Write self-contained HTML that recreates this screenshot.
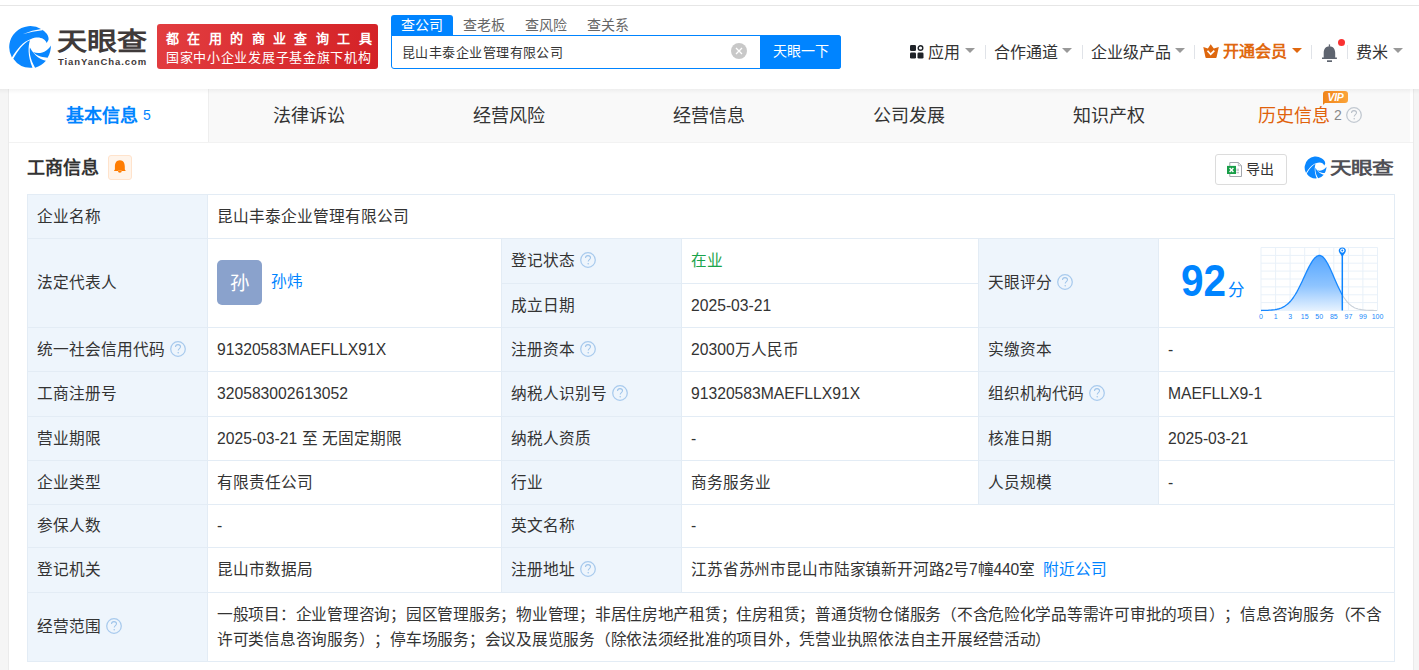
<!DOCTYPE html>
<html lang="zh-CN"><head><meta charset="utf-8">
<style>
*{box-sizing:border-box;margin:0;padding:0}
html,body{width:1419px;height:670px;overflow:hidden}
body{position:relative;background:#f5f5f5;font-family:"Liberation Sans",sans-serif;color:#333;text-spacing-trim:space-all}
.a{position:absolute;white-space:nowrap}
#top{left:0;top:0;width:1419px;height:89px;background:#fff;border-top:5px solid #fff}
#topline{left:0;top:5px;width:1419px;height:1px;background:#e6e6e6}
#hshadow{left:0;top:89px;width:1419px;height:5px;background:linear-gradient(rgba(0,0,0,.045),rgba(0,0,0,0))}
#card{left:8px;top:89px;width:1406px;height:600px;background:#fff;border-left:1px solid #ebebeb;border-right:1px solid #ebebeb}
.tab{top:89px;height:53px;width:200px;background:#f9f9f9;font-size:18px;line-height:53px;padding-top:1px;text-align:center;color:#333}
.lbl{font-size:15.7px;line-height:20px;color:#333}
.val{font-size:15.7px;line-height:20px;color:#333}
.bg{background:#eef5fc}
.cell{display:flex;align-items:center;gap:0}
.cell .q{margin-left:5px;position:relative;top:-1px}
.hl{background:#e3ecf5;height:1px}
.vl{background:#e3ecf5;width:1px}
.q{display:block;width:16px;height:16px;flex:none}
.nav{font-size:16px;line-height:20px;color:#333;top:43px}
.tri{width:0;height:0;border-left:5px solid transparent;border-right:5px solid transparent;border-top:5px solid #999;top:48px}
.sep{width:1px;height:14px;background:#e0e3e8;top:45px}
</style></head><body>
<div class="a" id="top"></div>
<div class="a" id="topline"></div>

<!-- logo -->
<svg class="a" style="left:8px;top:25px" width="44" height="44" viewBox="8 25 44 44">
<g fill="#0a87ff">
<path d="M11.9,57.5 A21.1,21.1 0 0 1 41.5,29.3 C46.1,32.2 49.4,36.2 48.4,40.1 L46.7,43.1 C44.8,38.1 38.2,35.8 31,39.1 C23.1,41.4 16.5,50 11.9,57.5 Z"/>
<path d="M13.3,58.8 C17.8,50.6 23.8,42.4 30,40.2 C28,46 27.5,56 32.5,67.7 A21.1,21.1 0 0 1 13.3,58.8 Z"/>
<path d="M29.9,47.4 C29.3,52 29.8,58 35.1,67.7 A21.1,21.1 0 0 0 45.9,60.8 C41,59.5 35,56.5 29.9,47.4 Z"/>
<path d="M33.1,52.1 C37,53.5 42,53.5 46.3,50.4 C48.5,49 50,47.5 50.9,45.6 C51,49 50,54 47.6,57.7 C44,57.5 37,56.5 33.1,52.1 Z"/>
</g>
<path d="M22.5,34.3 Q32,30 42.5,28.8 L42.5,30.2 Q32.5,31.4 22.5,34.3Z" fill="#fff"/>
</svg>
<div class="a" style="left:57px;top:26px;font-size:25px;line-height:30px;font-weight:bold;color:#3f3a3a;transform-origin:0 0;transform:scaleX(1.2)">天眼查</div>
<div class="a" style="left:58px;top:57px;font-size:9.5px;line-height:10px;font-weight:bold;color:#3f3a3a;letter-spacing:0.9px">TianYanCha.com</div>

<!-- red banner -->
<div class="a" style="left:157px;top:24px;width:221px;height:45px;border-radius:3px;background:linear-gradient(100deg,#e23d40,#d42226)"></div>
<div class="a" style="left:166px;top:30px;font-size:13px;line-height:18px;color:#fff;letter-spacing:8.4px;font-weight:bold">都在用的商业查询工具</div>
<div class="a" style="left:166px;top:48.5px;font-size:13px;line-height:18px;color:#fff;letter-spacing:0.7px">国家中小企业发展子基金旗下机构</div>

<!-- search -->
<div class="a" style="left:391px;top:15px;width:62px;height:21px;background:#0084ff;border-radius:3px 3px 0 0"></div>
<div class="a" style="left:391px;top:15px;width:62px;font-size:14px;line-height:20px;text-align:center;color:#fff">查公司</div>
<div class="a" style="left:453px;top:15px;width:62px;font-size:14px;line-height:20px;text-align:center;color:#666">查老板</div>
<div class="a" style="left:515px;top:15px;width:62px;font-size:14px;line-height:20px;text-align:center;color:#666">查风险</div>
<div class="a" style="left:577px;top:15px;width:62px;font-size:14px;line-height:20px;text-align:center;color:#666">查关系</div>
<div class="a" style="left:391px;top:35px;width:450px;height:34px;border:1px solid #0084ff;border-radius:0 3px 3px 3px;background:#fff"></div>
<div class="a" style="left:402px;top:42.5px;font-size:13px;letter-spacing:0.45px;line-height:20px;color:#333">昆山丰泰企业管理有限公司</div>
<div class="a" style="left:731px;top:43px;width:16px;height:16px;border-radius:50%;background:#c8c8c8"></div>
<svg class="a" style="left:731px;top:43px" width="16" height="16" viewBox="0 0 16 16"><path d="M5,5 L11,11 M11,5 L5,11" stroke="#fff" stroke-width="1.3"/></svg>
<div class="a" style="left:760px;top:35px;width:81px;height:34px;background:#0084ff;border-radius:0 3px 3px 0"></div>
<div class="a" style="left:760px;top:41px;width:81px;font-size:14px;line-height:20px;text-align:center;color:#fff">天眼一下</div>

<!-- right nav -->
<svg class="a" style="left:910px;top:45px" width="14" height="14" viewBox="0 0 14 14"><g fill="#1f2329"><rect x="0" y="0" width="6" height="6" rx="1.3"/><rect x="0" y="7.5" width="6" height="6" rx="1.3"/><rect x="7.5" y="7.5" width="6" height="6" rx="1.3"/></g><circle cx="10.5" cy="3" r="2.3" fill="none" stroke="#1f2329" stroke-width="1.4"/></svg>
<div class="a nav" style="left:928px">应用</div>
<div class="a tri" style="left:965px"></div>
<div class="a sep" style="left:985px"></div>
<div class="a nav" style="left:994px">合作通道</div>
<div class="a tri" style="left:1062px"></div>
<div class="a sep" style="left:1082px"></div>
<div class="a nav" style="left:1091px">企业级产品</div>
<div class="a tri" style="left:1175px"></div>
<div class="a sep" style="left:1194px"></div>
<svg class="a" style="left:1203px;top:44px" width="16" height="14" viewBox="0 0 16 14"><path d="M0.3,3.1 L4.9,4.6 L7.7,0.3 L10.8,4.6 L15.8,3.1 L13.5,13.5 Q13.3,13.9 12.8,13.9 L3.2,13.9 Q2.7,13.9 2.5,13.5 Z" fill="#de670e"/><path d="M4.5,6.7 L7.7,10.2 L11.3,6.7" stroke="#fff" stroke-width="1.7" fill="none"/></svg>
<div class="a nav" style="left:1223px;top:42px;color:#e0680f;font-weight:bold">开通会员</div>
<div class="a tri" style="left:1292px;border-top-color:#e0680f"></div>
<div class="a sep" style="left:1311px"></div>
<svg class="a" style="left:1322px;top:42.5px" width="15" height="20" viewBox="0 0 15 20"><g fill="#5f6570"><rect x="6.8" y="1.4" width="1.3" height="2.4"/><path d="M7.45,3.3 C11,3.4 13.2,6 13.2,9.8 L13.2,14.4 L14.9,14.4 L14.9,16.1 L0,16.1 L0,14.4 L1.7,14.4 L1.7,9.8 C1.7,6 3.9,3.4 7.45,3.3 Z"/><rect x="5" y="17.3" width="5" height="1.7"/></g></svg>
<div class="a" style="left:1338px;top:39px;width:7px;height:7px;border-radius:50%;background:#fa3232"></div>
<div class="a sep" style="left:1347px"></div>
<div class="a nav" style="left:1356px">费米</div>
<div class="a tri" style="left:1393px"></div>

<!-- card & tabs -->
<div class="a" id="card"></div>
<div class="a tab" style="left:9px;background:#fff;border-right:1px solid #eee;color:#0084ff;font-weight:bold">基本信息<span style="font-weight:normal;font-size:14px;margin-left:5px;position:relative;top:-2px">5</span></div>
<div class="a tab" style="left:209px">法律诉讼</div>
<div class="a tab" style="left:409px">经营风险</div>
<div class="a tab" style="left:609px">经营信息</div>
<div class="a tab" style="left:809px">公司发展</div>
<div class="a tab" style="left:1009px">知识产权</div>
<div class="a tab" style="left:1209px;width:201px;color:#e0620c;text-align:left;padding-left:49px">历史信息<span style="color:#888;font-size:14px;margin-left:4px;position:relative;top:-2.5px">2</span></div>
<svg class="a" style="left:1346px;top:107px" width="16" height="16" viewBox="0 0 16 16"><circle cx="8" cy="8" r="7.3" fill="none" stroke="#c2c9d1" stroke-width="1.3"/><path d="M5.5,6 C5.5,4.4 6.6,3.6 8,3.6 C9.4,3.6 10.5,4.5 10.5,5.8 C10.5,7.5 8.2,7.7 8.2,9.6" fill="none" stroke="#b8bfc8" stroke-width="1.05"/><circle cx="8.2" cy="11.7" r="0.75" fill="#b8bfc8"/></svg>
<div class="a" style="left:9px;top:142px;width:1404px;height:1px;background:#f2f2f2"></div>
<div class="a" id="hshadow"></div>

<!-- VIP badge -->
<div class="a" style="left:1323px;top:91px;width:25px;height:12px;border-radius:3px 3px 3px 0;background:linear-gradient(90deg,#f08419,#fba43a);color:#fff;font-size:10.5px;line-height:12px;font-weight:bold;font-style:italic;text-align:center;letter-spacing:-0.3px">VIP</div>
<div class="a" style="left:1323px;top:102px;width:0;height:0;border-top:3px solid #f08419;border-right:3px solid transparent"></div>

<!-- section header -->
<div class="a" style="left:27px;top:157px;font-size:18px;line-height:22px;font-weight:bold;color:#333">工商信息</div>
<div class="a" style="left:108px;top:155px;width:24px;height:25px;background:#fff4ea;border:1px solid #ffe3cc;border-radius:3px"></div>
<svg class="a" style="left:114px;top:160px" width="12" height="14" viewBox="0 0 12 14"><path d="M5.85,0.2 C9.3,0.2 10.8,3 10.8,6.5 L10.8,9.4 L11.8,10.9 L-0.1,10.9 L0.9,9.4 L0.9,6.5 C0.9,3 2.4,0.2 5.85,0.2 Z M3.9,10.8 A1.95,1.95 0 0 0 7.8,10.8 Z" fill="#ff7c00"/></svg>

<div class="a" style="left:1215px;top:154px;width:72px;height:31px;border:1px solid #dcdcdc;border-radius:3px;background:#fff"></div>
<svg class="a" style="left:1226px;top:162px" width="17" height="16" viewBox="0 0 17 16"><path d="M3.8,0.5 L12.3,0.5 L15.5,3.7 L15.5,14.5 L3.8,14.5 Z" fill="#fff" stroke="#a3a7ad" stroke-width="1"/><path d="M12.3,0.5 L12.3,3.7 L15.5,3.7" fill="none" stroke="#a3a7ad" stroke-width="0.8"/><rect x="10.4" y="6.6" width="2.6" height="2.6" fill="#c9ccd0"/><rect x="10.4" y="10.3" width="2.6" height="0.9" fill="#a3a7ad"/><rect x="1" y="3.9" width="9" height="8.1" fill="#189e48"/><path d="M3.6,6 L7.4,10 M7.4,6 L3.6,10" stroke="#fff" stroke-width="1.4"/></svg>
<div class="a" style="left:1246px;top:159px;font-size:14px;line-height:20px;color:#333">导出</div>

<svg class="a" style="left:1304px;top:156px" width="23" height="23" viewBox="8 25 44 44">
<g fill="#0a87ff">
<path d="M11.9,57.5 A21.1,21.1 0 0 1 41.5,29.3 C46.1,32.2 49.4,36.2 48.4,40.1 L46.7,43.1 C44.8,38.1 38.2,35.8 31,39.1 C23.1,41.4 16.5,50 11.9,57.5 Z"/>
<path d="M13.3,58.8 C17.8,50.6 23.8,42.4 30,40.2 C28,46 27.5,56 32.5,67.7 A21.1,21.1 0 0 1 13.3,58.8 Z"/>
<path d="M29.9,47.4 C29.3,52 29.8,58 35.1,67.7 A21.1,21.1 0 0 0 45.9,60.8 C41,59.5 35,56.5 29.9,47.4 Z"/>
<path d="M33.1,52.1 C37,53.5 42,53.5 46.3,50.4 C48.5,49 50,47.5 50.9,45.6 C51,49 50,54 47.6,57.7 C44,57.5 37,56.5 33.1,52.1 Z"/>
</g>
</svg>
<div class="a" style="left:1330px;top:157px;font-size:17.5px;line-height:22px;font-weight:bold;color:#505056;transform-origin:0 0;transform:scaleX(1.24)">天眼查</div>

<!-- TABLE -->
<div id="tbl">
<div class="a" style="left:27px;top:194px;width:1368px;height:468px;background:#fff"></div>
<div class="a bg" style="left:27px;top:194px;width:180px;height:467px"></div>
<div class="a bg" style="left:501px;top:238px;width:180px;height:354px"></div>
<div class="a bg" style="left:978px;top:238px;width:180px;height:266px"></div>
<div class="a hl" style="left:27px;top:194px;width:1368px"></div>
<div class="a hl" style="left:27px;top:238px;width:1368px"></div>
<div class="a hl" style="left:501px;top:283px;width:478px"></div>
<div class="a hl" style="left:27px;top:327px;width:1368px"></div>
<div class="a hl" style="left:27px;top:371px;width:1368px"></div>
<div class="a hl" style="left:27px;top:416px;width:1368px"></div>
<div class="a hl" style="left:27px;top:460px;width:1368px"></div>
<div class="a hl" style="left:27px;top:504px;width:1368px"></div>
<div class="a hl" style="left:27px;top:547px;width:1368px"></div>
<div class="a hl" style="left:27px;top:592px;width:1368px"></div>
<div class="a hl" style="left:27px;top:661px;width:1368px"></div>
<div class="a vl" style="left:27px;top:194px;height:468px"></div>
<div class="a vl" style="left:1394px;top:194px;height:468px"></div>
<div class="a vl" style="left:207px;top:194px;height:468px"></div>
<div class="a vl" style="left:501px;top:238px;height:355px"></div>
<div class="a vl" style="left:681px;top:238px;height:355px"></div>
<div class="a vl" style="left:978px;top:238px;height:267px"></div>
<div class="a vl" style="left:1158px;top:238px;height:267px"></div>
<div class="a lbl cell" style="left:37px;top:195px;height:43px;">企业名称</div>
<div class="a val cell" style="left:217px;top:195px;height:43px;">昆山丰泰企业管理有限公司</div>
<div class="a lbl cell" style="left:37px;top:239px;height:88px;">法定代表人</div>
<div class="a" style="left:217px;top:260px;width:45px;height:45px;border-radius:5px;background:#8aa2cc;color:#fff;font-size:19.5px;line-height:46px;text-align:center">孙</div>
<div class="a val" style="left:271px;top:272px;color:#0084ff">孙炜</div>
<div class="a lbl cell" style="left:511px;top:239px;height:44px;">登记状态<svg class="q" width="16" height="16" viewBox="0 0 16 16"><circle cx="8" cy="8" r="7.3" fill="none" stroke="#a8caed" stroke-width="1.25"/><path d="M5.5,6 C5.5,4.4 6.6,3.6 8,3.6 C9.4,3.6 10.5,4.5 10.5,5.8 C10.5,7.5 8.2,7.7 8.2,9.6" fill="none" stroke="#9fc4ea" stroke-width="1.05"/><circle cx="8.2" cy="11.7" r="0.75" fill="#9fc4ea"/></svg></div>
<div class="a val cell" style="left:691px;top:239px;height:44px;color:#1aa44b">在业</div>
<div class="a lbl cell" style="left:511px;top:284px;height:43px;">成立日期</div>
<div class="a val cell" style="left:691px;top:284px;height:43px;">2025-03-21</div>
<div class="a lbl cell" style="left:988px;top:239px;height:88px;">天眼评分<svg class="q" width="16" height="16" viewBox="0 0 16 16"><circle cx="8" cy="8" r="7.3" fill="none" stroke="#a8caed" stroke-width="1.25"/><path d="M5.5,6 C5.5,4.4 6.6,3.6 8,3.6 C9.4,3.6 10.5,4.5 10.5,5.8 C10.5,7.5 8.2,7.7 8.2,9.6" fill="none" stroke="#9fc4ea" stroke-width="1.05"/><circle cx="8.2" cy="11.7" r="0.75" fill="#9fc4ea"/></svg></div>
<div class="a lbl cell" style="left:37px;top:328px;height:43px;">统一社会信用代码<svg class="q" width="16" height="16" viewBox="0 0 16 16"><circle cx="8" cy="8" r="7.3" fill="none" stroke="#a8caed" stroke-width="1.25"/><path d="M5.5,6 C5.5,4.4 6.6,3.6 8,3.6 C9.4,3.6 10.5,4.5 10.5,5.8 C10.5,7.5 8.2,7.7 8.2,9.6" fill="none" stroke="#9fc4ea" stroke-width="1.05"/><circle cx="8.2" cy="11.7" r="0.75" fill="#9fc4ea"/></svg></div>
<div class="a val cell" style="left:217px;top:328px;height:43px;">91320583MAEFLLX91X</div>
<div class="a lbl cell" style="left:511px;top:328px;height:43px;">注册资本<svg class="q" width="16" height="16" viewBox="0 0 16 16"><circle cx="8" cy="8" r="7.3" fill="none" stroke="#a8caed" stroke-width="1.25"/><path d="M5.5,6 C5.5,4.4 6.6,3.6 8,3.6 C9.4,3.6 10.5,4.5 10.5,5.8 C10.5,7.5 8.2,7.7 8.2,9.6" fill="none" stroke="#9fc4ea" stroke-width="1.05"/><circle cx="8.2" cy="11.7" r="0.75" fill="#9fc4ea"/></svg></div>
<div class="a val cell" style="left:691px;top:328px;height:43px;">20300万人民币</div>
<div class="a lbl cell" style="left:988px;top:328px;height:43px;">实缴资本</div>
<div class="a val cell" style="left:1168px;top:328px;height:43px;">-</div>
<div class="a lbl cell" style="left:37px;top:372px;height:44px;">工商注册号</div>
<div class="a val cell" style="left:217px;top:372px;height:44px;">320583002613052</div>
<div class="a lbl cell" style="left:511px;top:372px;height:44px;">纳税人识别号<svg class="q" width="16" height="16" viewBox="0 0 16 16"><circle cx="8" cy="8" r="7.3" fill="none" stroke="#a8caed" stroke-width="1.25"/><path d="M5.5,6 C5.5,4.4 6.6,3.6 8,3.6 C9.4,3.6 10.5,4.5 10.5,5.8 C10.5,7.5 8.2,7.7 8.2,9.6" fill="none" stroke="#9fc4ea" stroke-width="1.05"/><circle cx="8.2" cy="11.7" r="0.75" fill="#9fc4ea"/></svg></div>
<div class="a val cell" style="left:691px;top:372px;height:44px;">91320583MAEFLLX91X</div>
<div class="a lbl cell" style="left:988px;top:372px;height:44px;">组织机构代码<svg class="q" width="16" height="16" viewBox="0 0 16 16"><circle cx="8" cy="8" r="7.3" fill="none" stroke="#a8caed" stroke-width="1.25"/><path d="M5.5,6 C5.5,4.4 6.6,3.6 8,3.6 C9.4,3.6 10.5,4.5 10.5,5.8 C10.5,7.5 8.2,7.7 8.2,9.6" fill="none" stroke="#9fc4ea" stroke-width="1.05"/><circle cx="8.2" cy="11.7" r="0.75" fill="#9fc4ea"/></svg></div>
<div class="a val cell" style="left:1168px;top:372px;height:44px;">MAEFLLX9-1</div>
<div class="a lbl cell" style="left:37px;top:417px;height:43px;">营业期限</div>
<div class="a val cell" style="left:217px;top:417px;height:43px;">2025-03-21 至 无固定期限</div>
<div class="a lbl cell" style="left:511px;top:417px;height:43px;">纳税人资质</div>
<div class="a val cell" style="left:691px;top:417px;height:43px;">-</div>
<div class="a lbl cell" style="left:988px;top:417px;height:43px;">核准日期</div>
<div class="a val cell" style="left:1168px;top:417px;height:43px;">2025-03-21</div>
<div class="a lbl cell" style="left:37px;top:461px;height:43px;">企业类型</div>
<div class="a val cell" style="left:217px;top:461px;height:43px;">有限责任公司</div>
<div class="a lbl cell" style="left:511px;top:461px;height:43px;">行业</div>
<div class="a val cell" style="left:691px;top:461px;height:43px;">商务服务业</div>
<div class="a lbl cell" style="left:988px;top:461px;height:43px;">人员规模</div>
<div class="a val cell" style="left:1168px;top:461px;height:43px;">-</div>
<div class="a lbl cell" style="left:37px;top:505px;height:42px;">参保人数</div>
<div class="a val cell" style="left:217px;top:505px;height:42px;">-</div>
<div class="a lbl cell" style="left:511px;top:505px;height:42px;">英文名称</div>
<div class="a val cell" style="left:691px;top:505px;height:42px;">-</div>
<div class="a lbl cell" style="left:37px;top:548px;height:44px;">登记机关</div>
<div class="a val cell" style="left:217px;top:548px;height:44px;">昆山市数据局</div>
<div class="a lbl cell" style="left:511px;top:548px;height:44px;">注册地址<svg class="q" width="16" height="16" viewBox="0 0 16 16"><circle cx="8" cy="8" r="7.3" fill="none" stroke="#a8caed" stroke-width="1.25"/><path d="M5.5,6 C5.5,4.4 6.6,3.6 8,3.6 C9.4,3.6 10.5,4.5 10.5,5.8 C10.5,7.5 8.2,7.7 8.2,9.6" fill="none" stroke="#9fc4ea" stroke-width="1.05"/><circle cx="8.2" cy="11.7" r="0.75" fill="#9fc4ea"/></svg></div>
<div class="a val cell" style="left:691px;top:548px;height:44px;"><span style="letter-spacing:-0.15px">江苏省苏州市昆山市陆家镇新开河路2号7幢440室</span><span style="color:#0084ff;margin-left:8px">附近公司</span></div>
<div class="a lbl cell" style="left:37px;top:593px;height:68px;">经营范围<svg class="q" width="16" height="16" viewBox="0 0 16 16"><circle cx="8" cy="8" r="7.3" fill="none" stroke="#a8caed" stroke-width="1.25"/><path d="M5.5,6 C5.5,4.4 6.6,3.6 8,3.6 C9.4,3.6 10.5,4.5 10.5,5.8 C10.5,7.5 8.2,7.7 8.2,9.6" fill="none" stroke="#9fc4ea" stroke-width="1.05"/><circle cx="8.2" cy="11.7" r="0.75" fill="#9fc4ea"/></svg></div>
<div class="a val" style="left:217px;top:603px;line-height:24.5px;letter-spacing:-0.26px">一般项目：企业管理咨询；园区管理服务；物业管理；非居住房地产租赁；住房租赁；普通货物仓储服务（不含危险化学品等需许可审批的项目）；信息咨询服务（不含<br>许可类信息咨询服务）；停车场服务；会议及展览服务（除依法须经批准的项目外，凭营业执照依法自主开展经营活动）</div>
<!--chart-->
<svg class="a" style="left:1250px;top:240px" width="140" height="85" viewBox="0 0 140 85">
<defs><linearGradient id="g1" x1="0" y1="0" x2="0" y2="1"><stop offset="0" stop-color="#55a6ff"/><stop offset="0.55" stop-color="#8ec4ff"/><stop offset="1" stop-color="#e6f2ff"/></linearGradient></defs>
<line x1="11.0" y1="7.5" x2="11.0" y2="70.5" stroke="#e9f1f9" stroke-width="1"/><line x1="25.6" y1="7.5" x2="25.6" y2="70.5" stroke="#e9f1f9" stroke-width="1"/><line x1="40.1" y1="7.5" x2="40.1" y2="70.5" stroke="#e9f1f9" stroke-width="1"/><line x1="54.7" y1="7.5" x2="54.7" y2="70.5" stroke="#e9f1f9" stroke-width="1"/><line x1="69.2" y1="7.5" x2="69.2" y2="70.5" stroke="#e9f1f9" stroke-width="1"/><line x1="83.8" y1="7.5" x2="83.8" y2="70.5" stroke="#e9f1f9" stroke-width="1"/><line x1="98.4" y1="7.5" x2="98.4" y2="70.5" stroke="#e9f1f9" stroke-width="1"/><line x1="112.9" y1="7.5" x2="112.9" y2="70.5" stroke="#e9f1f9" stroke-width="1"/><line x1="127.5" y1="7.5" x2="127.5" y2="70.5" stroke="#e9f1f9" stroke-width="1"/><line x1="11" y1="7.5" x2="127.5" y2="7.5" stroke="#e9f1f9" stroke-width="1"/><line x1="11" y1="15.4" x2="127.5" y2="15.4" stroke="#e9f1f9" stroke-width="1"/><line x1="11" y1="23.2" x2="127.5" y2="23.2" stroke="#e9f1f9" stroke-width="1"/><line x1="11" y1="31.1" x2="127.5" y2="31.1" stroke="#e9f1f9" stroke-width="1"/><line x1="11" y1="39.0" x2="127.5" y2="39.0" stroke="#e9f1f9" stroke-width="1"/><line x1="11" y1="46.9" x2="127.5" y2="46.9" stroke="#e9f1f9" stroke-width="1"/><line x1="11" y1="54.8" x2="127.5" y2="54.8" stroke="#e9f1f9" stroke-width="1"/><line x1="11" y1="62.6" x2="127.5" y2="62.6" stroke="#e9f1f9" stroke-width="1"/><line x1="11" y1="70.5" x2="127.5" y2="70.5" stroke="#e9f1f9" stroke-width="1"/>
<polygon points="11.0,70.5 11.0,70.5 12.0,70.4 13.0,70.4 14.0,70.4 15.0,70.4 16.0,70.4 17.0,70.3 18.0,70.3 19.0,70.2 20.0,70.2 21.0,70.1 22.0,70.0 23.0,69.9 24.0,69.8 25.0,69.7 26.0,69.5 27.0,69.3 28.0,69.0 29.0,68.8 30.0,68.4 31.0,68.1 32.0,67.7 33.0,67.2 34.0,66.6 35.0,66.0 36.0,65.3 37.0,64.6 38.0,63.7 39.0,62.8 40.0,61.7 41.0,60.6 42.0,59.3 43.0,58.0 44.0,56.5 45.0,55.0 46.0,53.3 47.0,51.6 48.0,49.7 49.0,47.8 50.0,45.8 51.0,43.8 52.0,41.7 53.0,39.5 54.0,37.4 55.0,35.2 56.0,33.0 57.0,30.9 58.0,28.9 59.0,26.9 60.0,25.0 61.0,23.3 62.0,21.7 63.0,20.2 64.0,18.9 65.0,17.8 66.0,16.9 67.0,16.2 68.0,15.8 69.0,15.5 70.0,15.5 71.0,15.8 72.0,16.3 73.0,17.1 74.0,18.1 75.0,19.4 76.0,20.8 77.0,22.5 78.0,24.3 79.0,26.3 80.0,28.3 81.0,30.5 82.0,32.8 83.0,35.1 84.0,37.4 85.0,39.7 86.0,42.0 87.0,44.2 88.0,46.4 89.0,48.5 90.0,50.5 91.0,52.5 92.0,54.3 92.3,54.8 92.3,70.5" fill="url(#g1)"/>
<polyline points="11.0,70.5 12.0,70.4 13.0,70.4 14.0,70.4 15.0,70.4 16.0,70.4 17.0,70.3 18.0,70.3 19.0,70.2 20.0,70.2 21.0,70.1 22.0,70.0 23.0,69.9 24.0,69.8 25.0,69.7 26.0,69.5 27.0,69.3 28.0,69.0 29.0,68.8 30.0,68.4 31.0,68.1 32.0,67.7 33.0,67.2 34.0,66.6 35.0,66.0 36.0,65.3 37.0,64.6 38.0,63.7 39.0,62.8 40.0,61.7 41.0,60.6 42.0,59.3 43.0,58.0 44.0,56.5 45.0,55.0 46.0,53.3 47.0,51.6 48.0,49.7 49.0,47.8 50.0,45.8 51.0,43.8 52.0,41.7 53.0,39.5 54.0,37.4 55.0,35.2 56.0,33.0 57.0,30.9 58.0,28.9 59.0,26.9 60.0,25.0 61.0,23.3 62.0,21.7 63.0,20.2 64.0,18.9 65.0,17.8 66.0,16.9 67.0,16.2 68.0,15.8 69.0,15.5 70.0,15.5 71.0,15.8 72.0,16.3 73.0,17.1 74.0,18.1 75.0,19.4 76.0,20.8 77.0,22.5 78.0,24.3 79.0,26.3 80.0,28.3 81.0,30.5 82.0,32.8 83.0,35.1 84.0,37.4 85.0,39.7 86.0,42.0 87.0,44.2 88.0,46.4 89.0,48.5 90.0,50.5 91.0,52.5 92.0,54.3 92.3,54.8" fill="none" stroke="#1788ff" stroke-width="1.3"/>
<polyline points="92.3,54.8 93.0,56.0 94.0,57.6 95.0,59.0 96.0,60.4 97.0,61.6 98.0,62.7 99.0,63.8 100.0,64.7 101.0,65.5 102.0,66.2 103.0,66.8 104.0,67.4 105.0,67.9 106.0,68.3 107.0,68.6 108.0,69.0 109.0,69.2 110.0,69.4 111.0,69.6 112.0,69.8 113.0,69.9 114.0,70.0 115.0,70.1 116.0,70.2 117.0,70.3 118.0,70.3 119.0,70.4 120.0,70.4 121.0,70.4 122.0,70.4 123.0,70.4 124.0,70.5 125.0,70.5 126.0,70.5 127.0,70.5" fill="none" stroke="#c9d1da" stroke-width="1.1"/>
<line x1="92.29999999999995" y1="12" x2="92.29999999999995" y2="70.5" stroke="#0d84ff" stroke-width="1.5"/>
<path d="M88.69999999999996,11 A3.6,3.6 0 1 1 95.89999999999995,11 Q95.49999999999996,13 92.29999999999995,16.5 Q89.09999999999995,13 88.69999999999996,11 Z" fill="#0d84ff"/>
<circle cx="92.29999999999995" cy="10.6" r="2.1" fill="#fff"/><circle cx="92.29999999999995" cy="10.6" r="1" fill="#0d84ff"/>
<g fill="#2088fa" font-size="7" font-family="Liberation Sans, sans-serif"><text x="11.0" y="79" text-anchor="middle">0</text><text x="25.6" y="79" text-anchor="middle">1</text><text x="40.1" y="79" text-anchor="middle">3</text><text x="54.7" y="79" text-anchor="middle">15</text><text x="69.2" y="79" text-anchor="middle">50</text><text x="83.8" y="79" text-anchor="middle">85</text><text x="98.4" y="79" text-anchor="middle">97</text><text x="112.9" y="79" text-anchor="middle">99</text><text x="127.5" y="79" text-anchor="middle">100</text></g>
</svg>
<div class="a" style="left:1181px;top:258px;font-size:44px;line-height:46px;font-weight:bold;color:#0084ff;transform-origin:0 0;transform:scaleX(0.92)">92</div>
<div class="a" style="left:1228px;top:280px;font-size:16.5px;line-height:20px;color:#0084ff">分</div>
<!--/chart-->
</div>
</body></html>
